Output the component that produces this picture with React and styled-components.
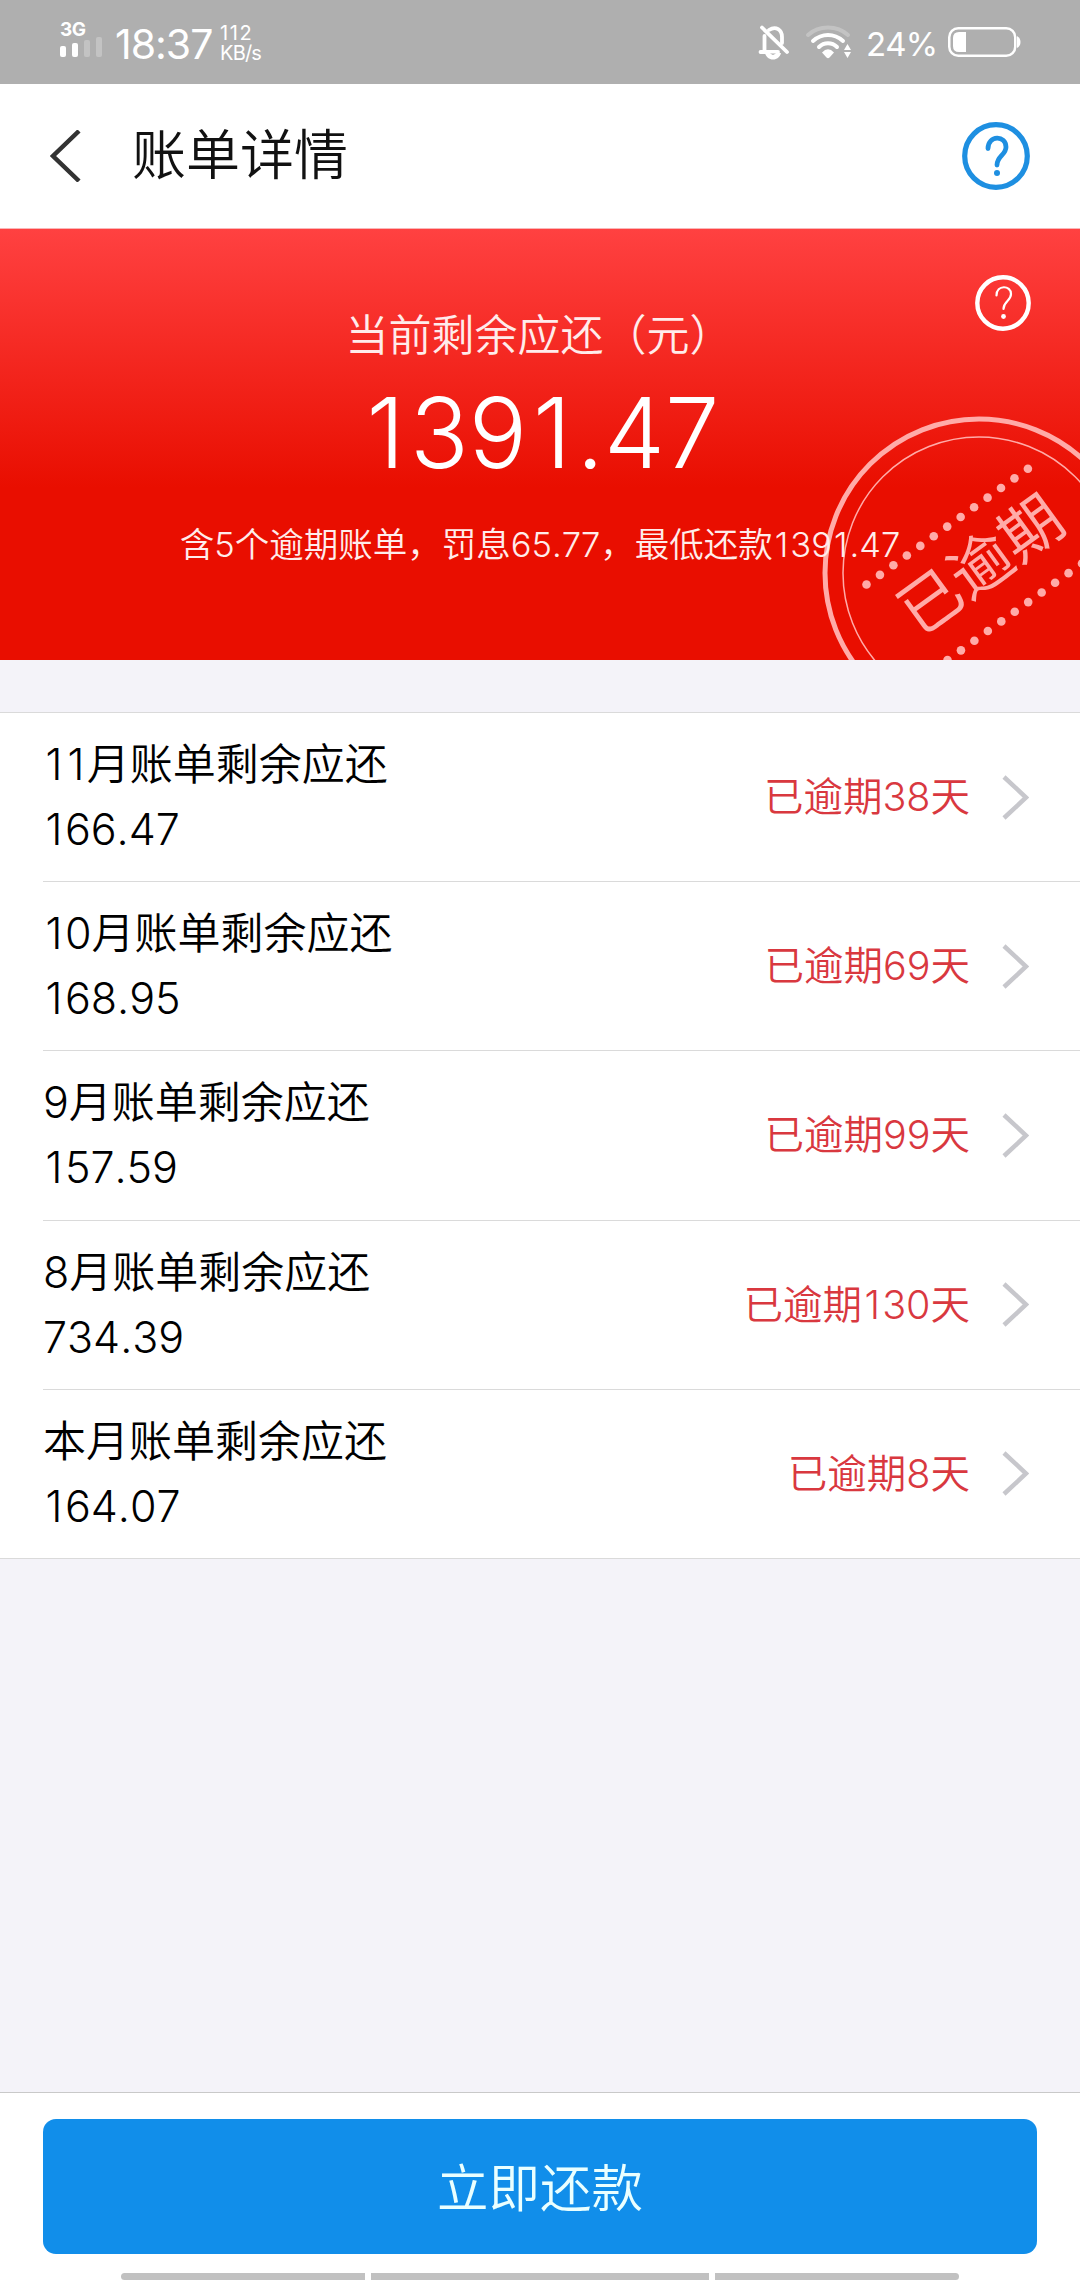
import React from "react";
import styled, { createGlobalStyle } from "styled-components";

const GlobalStyle = createGlobalStyle`
  body {
    margin: 0;
    font-family: Inter, "Noto Sans CJK SC", sans-serif;
    font-weight: 350;
    font-kerning: none;
    background-color: #f4f3f9;
  }
`;

const Page = styled.div`
  display: flex;
  flex-direction: column;
  width: 1080px;
  height: 2280px;
  overflow: hidden;
  background-color: #f4f3f9;
`;

const StatusBar = styled.div`
  display: flex;
  justify-content: space-between;
  height: 84px;
  flex-shrink: 0;
  box-sizing: border-box;
  padding: 0 59px 0 60px;
  background-color: #afafaf;
  color: #fff;
`;

const StatusGroup = styled.div`
  display: flex;
  align-items: flex-start;
`;

const Network = styled.div`
  display: flex;
  flex-direction: column;
  width: 55px;
  padding-top: 20px;
  font-size: 19px;
  font-weight: 700;
  line-height: 19px;
  letter-spacing: -0.5px;
`;

const SignalBars = styled.div`
  display: flex;
  align-items: flex-end;
  gap: 6px;
  height: 20px;
  margin-top: -2px;
`;

const SignalBar = styled.span`
  width: 6px;
  height: ${({ size }) => size}px;
  border-radius: 2px;
  background-color: ${({ on }) => (on ? "#fff" : "#c3c3c3")};
`;

const Clock = styled.div`
  width: 105px;
  padding-top: 20px;
  font-size: 41px;
  font-weight: 400;
  line-height: 48px;
  letter-spacing: -1px;
  white-space: nowrap;
`;

const Speed = styled.div`
  padding-top: 23px;
  font-size: 20px;
  font-weight: 400;
  line-height: 20px;
  letter-spacing: ${({ spacing }) => spacing || 0}px;

  & + & {
    padding-top: 0;
  }
`;

const Percent = styled.div`
  width: 82px;
  padding-top: 20px;
  font-size: 33px;
  font-weight: 400;
  line-height: 48px;
  letter-spacing: -0.8px;
  white-space: nowrap;
`;

const StatusIcon = styled.svg`
  display: block;
  margin-top: ${({ top }) => top}px;
  margin-right: ${({ gap }) => gap || 0}px;
`;

const Header = styled.header`
  display: flex;
  align-items: center;
  height: 145px;
  flex-shrink: 0;
  box-sizing: border-box;
  padding: 0 50px;
  background-color: #fff;
  border-bottom: 1px solid #f9b5b7;
`;

const Title = styled.div`
  flex: 1;
  margin-left: 50px;
  font-size: 54px;
  line-height: 70px;
  color: #111;
`;

// Inter's "1" is narrow, give it room on both sides
const One = styled.span`
  margin: 0 0.055em 0 0.06em;
`;

const Summary = styled.section`
  position: relative;
  display: flex;
  flex-direction: column;
  align-items: center;
  height: 431px;
  flex-shrink: 0;
  overflow: hidden;
  color: #fff;
  background: linear-gradient(#ff4141 0%, #e90e00 60%);
`;

const SummaryLabel = styled.div`
  margin-top: 76px;
  padding-right: 2px;
  font-size: 43px;
  line-height: 60px;
  color: #ffeceb;
`;

const Amount = styled.div`
  margin-top: 10px;
  font-size: 97px;
  font-weight: 300;
  line-height: 116px;
`;

const SummaryNote = styled.div`
  margin-top: 29px;
  font-size: 34.5px;
  line-height: 50px;
  color: #ffeceb;
  z-index: 1;
`;

const HelpIcon = styled.svg`
  position: absolute;
  top: 46px;
  right: 49px;
`;

const Stamp = styled.svg`
  position: absolute;
  right: 0;
  bottom: 0;
`;

const BillList = styled.div`
  margin-top: 52px;
  padding-left: 43px;
  background-color: #fff;
  border-top: 1px solid #dadada;
  border-bottom: 1px solid #dadada;
`;

const BillRow = styled.div`
  display: flex;
  align-items: center;
  height: 168.2px;
  padding-right: 51px;

  & + & {
    border-top: 1px solid #dadada;
  }
`;

const BillText = styled.div`
  flex: 1;
  font-size: 43px;
  line-height: 65px;
  color: #000;
`;

const Overdue = styled.div`
  margin-right: 32px;
  font-size: 39.5px;
  line-height: 60px;
  color: #d9383f;
`;

const Footer = styled.footer`
  display: flex;
  flex-direction: column;
  justify-content: space-between;
  height: 188px;
  box-sizing: border-box;
  margin-top: auto;
  padding-top: 26px;
  background-color: #fff;
  border-top: 1px solid #c9c9c9;
`;

const PayButton = styled.button`
  height: 135px;
  margin: 0 43px;
  padding: 0 0 5px;
  border: none;
  border-radius: 13px;
  font-family: inherit;
  font-weight: 350;
  font-size: 51.5px;
  color: #eaffff;
  background-color: #118eea;
`;

const GestureBar = styled.div`
  display: flex;
  justify-content: center;
  gap: 6px;
  height: 7px;
`;

const GesturePart = styled.span`
  width: ${({ size }) => size}px;
  border-radius: ${({ radius }) => radius || "0"};
  background-color: #c1c1c1;
`;

const bills = [
  { month: "11月", amount: "166.47", days: 38 },
  { month: "10月", amount: "168.95", days: 69 },
  { month: "9月", amount: "157.59", days: 99 },
  { month: "8月", amount: "734.39", days: 130 },
  { month: "本月", amount: "164.07", days: 8 },
];

const Figures = ({ children }) =>
  children
    .split(/(1)/)
    .map((part, i) => (part === "1" ? <One key={i}>1</One> : part));

const BellOff = () => (
  <StatusIcon width="32" height="36" viewBox="0 0 32 36" gap={15} top={24}>
    <g fill="none" stroke="#fff" strokeWidth="3.800" strokeLinecap="round">
      <path d="M6.500 12V26M2.500 28H20M11 6C18 1.500 24 6 24 13V19" />
      <path d="M4 3.500L29 28" />
    </g>
    <path d="M7 29H23C22 33 19 35.500 15 35.500S8 33 7 29Z" fill="#fff" />
    <path d="M12 29.500H18L15 31Z" fill="#afafaf" />
  </StatusIcon>
);

const Wifi = () => (
  <StatusIcon width="47" height="36" viewBox="0 0 47 36" gap={14} top={24}>
    <g fill="none" stroke="#fff" strokeWidth="4" strokeLinecap="round">
      <path d="M3 11C14 1 32 1 43 11" stroke="#c3c3c3" />
      <path d="M8 17C17 9 29 9 38 17" />
      <path d="M14 23C19 18 27 18 32 23" />
    </g>
    <path d="M17 28.500Q23 22 29 28.500L24.500 33.500Q23 35 21.500 33.500Z" fill="#fff" />
    <path d="M39 26L42.500 20L46 26ZM39 28L42.500 34L46 28Z" fill="#fff" />
  </StatusIcon>
);

const Battery = () => (
  <StatusIcon width="73" height="32" viewBox="0 0 73 32" top={26}>
    <rect x="1.250" y="2.250" width="66" height="27.500" rx="9" fill="none" stroke="#fff" strokeWidth="2.500" />
    <path d="M18 6V26H11Q5 26 5 20V12Q5 6 11 6Z" fill="#fff" />
    <path d="M69 10Q72.500 12 72.500 16T69 22Z" fill="#fff" />
  </StatusIcon>
);

const dots = Array.from({ length: 13 }, (_, i) => i);

const OverdueStamp = () => (
  <Stamp width="260" height="245" viewBox="820 415 260 245">
    <g fill="none" stroke="#ffaba8">
      <circle cx="979" cy="573" r="154" strokeWidth="5" />
      <circle cx="979" cy="573" r="136" strokeWidth="1.500" />
    </g>
    <g fill="#ffaba8">
      {dots.map((i) => (
        <circle key={`t${i}`} cx={866.5 + i * 13.45} cy={584.5 - i * 9.65} r="4.300" />
      ))}
      {dots.map((i) => (
        <circle key={`b${i}`} cx={947.5 + i * 13.45} cy={660 - i * 9.65} r="4.300" />
      ))}
      <text
        transform="translate(981 565) rotate(-36)"
        textAnchor="middle"
        y="22"
        fontSize="62"
        fontWeight="380"
      >
        已逾期
      </text>
    </g>
  </Stamp>
);

const App = () => {
  return (
    <Page>
      <GlobalStyle />
      <StatusBar>
        <StatusGroup>
          <Network>
            3G
            <SignalBars>
              <SignalBar size={11} on />
              <SignalBar size={14} on />
              <SignalBar size={17} />
              <SignalBar size={20} />
            </SignalBars>
          </Network>
          <Clock>18:37</Clock>
          <div>
            <Speed spacing={1.6}>112</Speed>
            <Speed spacing={-0.8}>KB/s</Speed>
          </div>
        </StatusGroup>
        <StatusGroup>
          <BellOff />
          <Wifi />
          <Percent>24%</Percent>
          <Battery />
        </StatusGroup>
      </StatusBar>

      <Header>
        <svg width="32" height="52" viewBox="0 0 32 52">
          <path d="M29 1L3 26L29 51" fill="none" stroke="#333" strokeWidth="4.500" />
        </svg>
        <Title>账单详情</Title>
        <svg width="68" height="68" viewBox="0 0 68 68">
          <g fill="none" stroke="#1e8fe1" strokeLinecap="round">
            <circle cx="34" cy="34" r="31.300" strokeWidth="5.200" />
            <path d="M26 26.500C26 13 44 13 44 25C44 33 35 34 35 43" strokeWidth="4.800" />
          </g>
          <circle cx="35" cy="51" r="3" fill="#1e8fe1" />
        </svg>
      </Header>

      <Summary>
        <OverdueStamp />
        <HelpIcon width="56" height="56" viewBox="0 0 56 56">
          <g fill="none" stroke="#fff" strokeLinecap="round">
            <circle cx="28" cy="28" r="25.700" strokeWidth="4.400" />
            <path d="M21.500 20.500C21.500 9.500 36 10 36 19C36 26 28.500 26 28.500 34" strokeWidth="2.200" />
          </g>
          <circle cx="28.500" cy="41.500" r="2.400" fill="#fff" />
        </HelpIcon>
        <SummaryLabel>当前剩余应还（元）</SummaryLabel>
        <Amount>
          <Figures>1391.47</Figures>
        </Amount>
        <SummaryNote>
          <Figures>含5个逾期账单，罚息65.77，最低还款1391.47</Figures>
        </SummaryNote>
      </Summary>

      <BillList>
        {bills.map(({ month, amount, days }) => (
          <BillRow key={month}>
            <BillText>
              <div>
                <Figures>{`${month}账单剩余应还`}</Figures>
              </div>
              <div>
                <Figures>{amount}</Figures>
              </div>
            </BillText>
            <Overdue>
              <Figures>{`已逾期${days}天`}</Figures>
            </Overdue>
            <svg width="27" height="45" viewBox="0 0 27 45">
              <path d="M2 2L24 22.500L2 43" fill="none" stroke="#c7c7cc" strokeWidth="4.500" />
            </svg>
          </BillRow>
        ))}
      </BillList>

      <Footer>
        <PayButton>立即还款</PayButton>
        <GestureBar>
          <GesturePart size={244} radius="4px 0 0 4px" />
          <GesturePart size={338} />
          <GesturePart size={244} radius="0 4px 4px 0" />
        </GestureBar>
      </Footer>
    </Page>
  );
};

export default App;
